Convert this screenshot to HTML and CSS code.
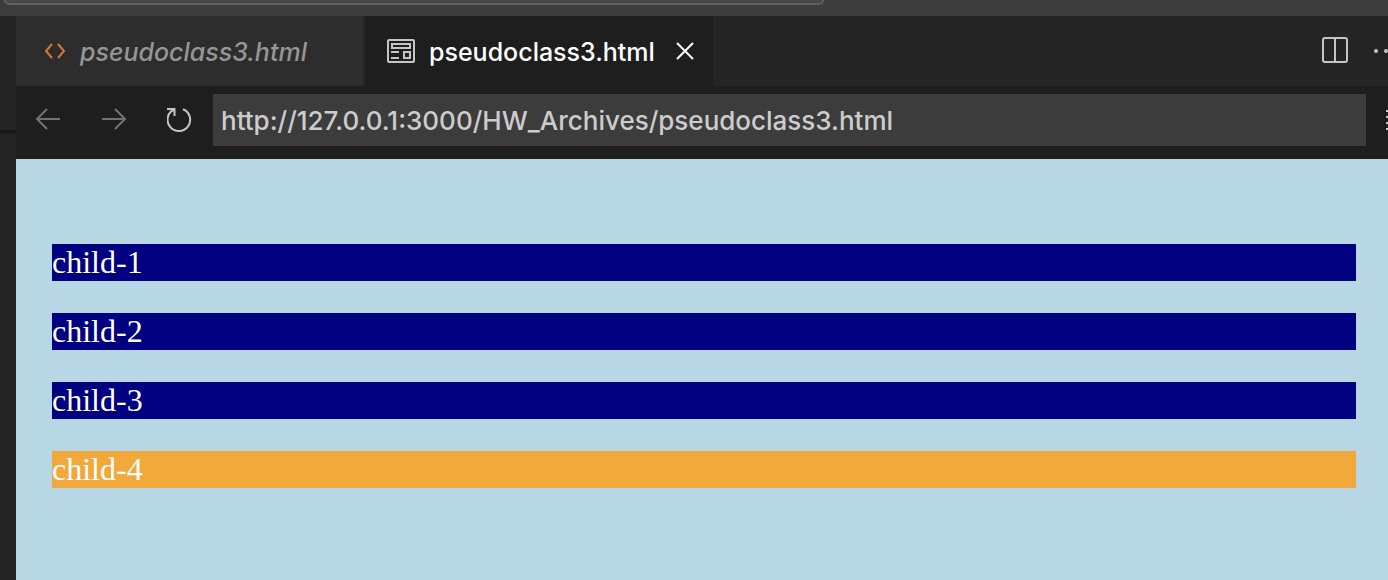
FILE: index.html
```html
<!DOCTYPE html>
<html lang="en">
<head>
<meta charset="utf-8">
<meta name="viewport" content="width=device-width, initial-scale=1">
<title>pseudoclass3.html</title>
<link rel="stylesheet" href="styles.css">
</head>
<body>
<div class="window">
  <header class="titlebar"><div class="command-center"></div></header>
  <div class="workbench">
    <aside class="sidebar"><div class="sidebar-top"></div><div class="sidebar-bottom"></div></aside>
    <div class="editor">
      <div class="tabs">
        <button class="tab tab-preview" type="button">
          <svg width="22" height="20" viewBox="0 0 22 20"><path d="M8 2L2 9l6 7M14 2l6 7-6 7" fill="none" stroke="#d9773a" stroke-width="2"/></svg>
          <span>pseudoclass3.html</span>
        </button>
        <div class="tab tab-active">
          <svg width="28" height="24" viewBox="0 0 28 24" fill="none" stroke="#c5c5c5" stroke-width="2"><rect x="1" y="1" width="26" height="22" rx="1"/><path d="M5 5h18v4H5zM4 13h8M4 19h8M17 13h6v6h-6z"/></svg>
          <button class="tab-label" type="button">pseudoclass3.html</button>
          <button class="close" type="button" aria-label="Close tab"><svg width="18" height="18" viewBox="0 0 18 18"><path d="M1 1l16 16M17 1L1 17" stroke="#fff" stroke-width="2"/></svg></button>
        </div>
        <div class="actions">
          <button type="button" aria-label="Split editor"><svg width="26" height="28" viewBox="0 0 26 28" fill="none" stroke="#c5c5c5" stroke-width="2"><rect x="1" y="1" width="24" height="24" rx="2"/><path d="M13 1v24"/></svg></button>
          <button type="button" aria-label="More actions"><svg width="24" height="4" viewBox="0 0 24 4" fill="#c5c5c5"><circle cx="2" cy="2" r="2"/><circle cx="12" cy="2" r="2"/><circle cx="22" cy="2" r="2"/></svg></button>
        </div>
      </div>
      <div class="toolbar">
        <nav class="nav">
          <button type="button" aria-label="Back" disabled><svg width="26" height="26" viewBox="0 0 26 26" fill="none" stroke="#737373" stroke-width="2"><path d="M25 12H2M12 2L2 12l10 10"/></svg></button>
          <button type="button" aria-label="Forward" disabled><svg width="26" height="26" viewBox="0 0 26 26" fill="none" stroke="#737373" stroke-width="2"><path d="M1 12h23M14 2l10 10-10 10"/></svg></button>
          <button type="button" aria-label="Reload"><svg width="26" height="26" viewBox="0 0 26 26" fill="none" stroke="#c5c5c5" stroke-width="2"><path d="M0 2h7.500v7M7 2.500A11.300 11.300 0 1 0 16 2.200"/></svg></button>
        </nav>
        <input class="address" type="text" aria-label="Address" value="http://127.0.0.1:3000/HW_Archives/pseudoclass3.html">
        <button class="menu" type="button" aria-label="Menu"><svg width="24" height="22" viewBox="0 0 24 22"><path d="M0 2h24M0 8h24M0 14h24M0 20h24" stroke="#c5c5c5" stroke-width="2"/></svg></button>
      </div>
      <main class="page">
        <p>child-1</p>
        <p>child-2</p>
        <p>child-3</p>
        <p>child-4</p>
      </main>
    </div>
  </div>
</div>
</body>
</html>
```
FILE: styles.css
```css
* { box-sizing: border-box; }

body {
  margin: 0;
  overflow: hidden;
  background: #252526;
  font: 500 26px/36px Inter, "Liberation Sans", sans-serif;
}

button {
  display: flex;
  flex: none;
  align-items: center;
  border: 0;
  padding: 0;
  background: none;
  color: inherit;
  font: inherit;
}

svg { display: block; flex: none; }

.window {
  display: flex;
  flex-direction: column;
  min-height: 100vh;
}

.titlebar {
  height: 16px;
  padding-left: 4px;
  background: #3c3c3c;
}

.command-center {
  width: 820px;
  height: 5px;
  border: 2px solid #606060;
  border-top: 0;
  border-radius: 0 0 12px 12px;
  background: #474747;
}

.workbench { display: flex; flex: 1; }

.sidebar {
  display: flex;
  flex: none;
  flex-direction: column;
  width: 16px;
}

.sidebar-top { height: 114px; }

.sidebar-bottom {
  flex: 1;
  border-top: 2px solid #181818;
  background: linear-gradient(#1b1b1b, #252526 4px);
}

.editor {
  display: flex;
  flex: 1;
  flex-direction: column;
  min-width: 0;
}

.tabs {
  display: flex;
  height: 70px;
  background: #252526;
  font-size: 25px;
}

.tab {
  display: flex;
  flex: none;
  align-items: center;
}

.tab-preview {
  gap: 14px;
  width: 349px;
  padding: 2px 0 0 28px;
  border-right: 2px solid #252526;
  background: #2d2d2d;
  color: #969696;
  font-style: italic;
}

.tab-active {
  gap: 14px;
  width: 348px;
  padding-left: 22px;
  background: #1e1e1e;
  color: #fff;
}

.tab-label { padding-top: 2px; }

.close { margin-left: auto; margin-right: 19px; }

.actions {
  display: flex;
  flex: 1;
  justify-content: flex-end;
  gap: 26px;
  margin-right: -10px;
}

.toolbar {
  display: flex;
  align-items: center;
  height: 73px;
  padding: 8px 0 13px;
  background: #1e1e1e;
}

.nav {
  display: flex;
  flex: none;
  gap: 40px;
  padding: 0 20px 0 19px;
}

.address {
  flex: 1;
  min-width: 0;
  height: 52px;
  border: 0;
  border-radius: 0;
  padding: 0 8px;
  background: #3c3c3c;
  color: #ccc;
  font: inherit;
}

.menu { margin: 0 -22px 0 20px; }

.page {
  flex: 1;
  padding: 85px 32px 32px 36px;
  background: #b7d7e4;
  color: #fff;
  font: 32px/37px "Liberation Serif", serif;
}

.page p { margin: 0 0 32px; background: #000080; }

.page p:last-child { background: #f2a93b; }
```
